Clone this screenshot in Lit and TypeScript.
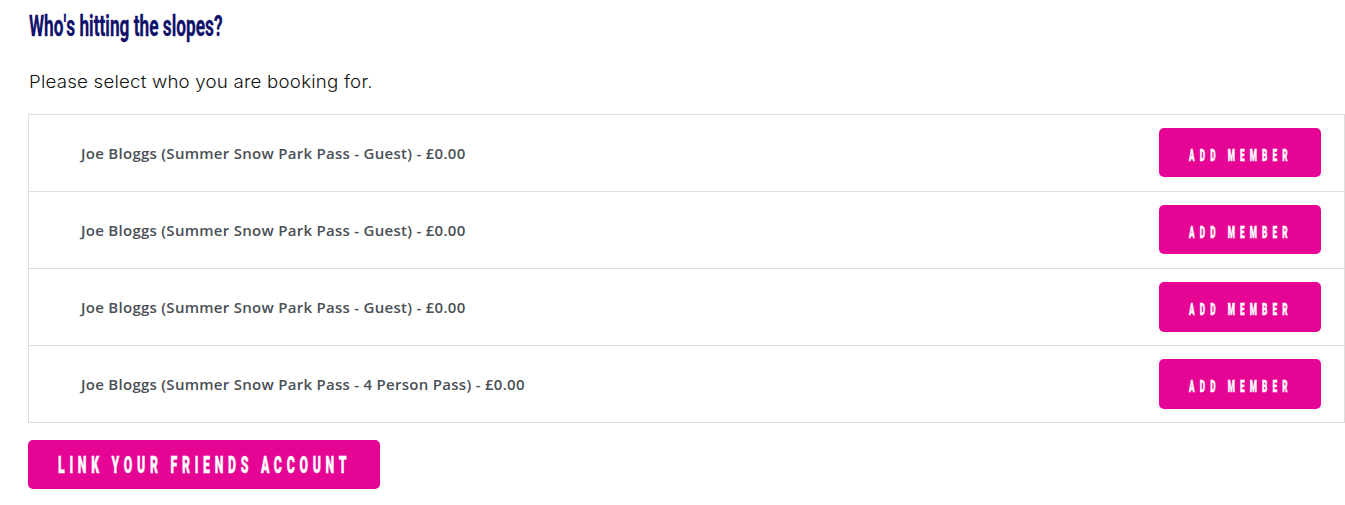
import { LitElement, html, css } from "lit";
import { customElement } from "lit/decorators.js";

const members = [
  "Joe Bloggs (Summer Snow Park Pass - Guest) - £0.00",
  "Joe Bloggs (Summer Snow Park Pass - Guest) - £0.00",
  "Joe Bloggs (Summer Snow Park Pass - Guest) - £0.00",
  "Joe Bloggs (Summer Snow Park Pass - 4 Person Pass) - £0.00",
];

@customElement("app-root")
export class AppRoot extends LitElement {
  static styles = css`
    :host { display: block; box-sizing: border-box; height: 505px; padding: 8px 0 0 28px; background: #fff; overflow: hidden; }
    .title, .intro, .label, .caption { display: inline-block; white-space: nowrap; transform-origin: 0 50%; }
    .head { height: 36px; padding-left: 1px; }
    .title { margin: 0; font: 700 29px/36px Roboto, sans-serif; font-kerning: none; color: #10106b; -webkit-text-stroke: 0.3px #10106b; transform: scaleX(0.595); }
    .lead { height: 70px; padding: 26px 0 0 1px; box-sizing: border-box; }
    .intro { margin: 0; font: 300 17.5px/24px Inter, sans-serif; letter-spacing: 0.2px; color: #111; transform: scaleX(1.067); }
    .list { border: 1px solid #dedede; border-bottom: 0; }
    .row { box-sizing: border-box; height: 77px; border-bottom: 1px solid #dedede; display: flex; align-items: flex-start; justify-content: space-between; padding: 13px 23px 0 52px; }
    .row:nth-child(n + 3) .btn { height: 50px; }
    .label { font: 600 15px/20px "Open Sans", sans-serif; letter-spacing: 0.28px; color: #4a5056; margin-top: 15px; }
    .btn { box-sizing: border-box; border: 0; margin: 0; padding: 7px 0 0 30px; display: flex; align-items: flex-start; border-radius: 5px; background: #e60495; color: #fff; width: 162px; height: 49px; }
    .caption { font: 900 16px/42px Roboto, sans-serif; letter-spacing: 9.9px; -webkit-text-stroke: 0.4px #fff; transform: scaleX(0.515); }
    .link { width: 352px; margin-top: 17px; padding-top: 4px; }
    .link .caption { font-size: 24px; letter-spacing: 9.1px; }
  `;

  render() {
    return html`
      <div class="head"><h2 class="title">Who's hitting the slopes?</h2></div>
      <div class="lead"><p class="intro">Please select who you are booking for.</p></div>
      <div class="list">
        ${members.map((m) => html`<div class="row"><span class="label">${m}</span><button class="btn"><span class="caption">ADD MEMBER</span></button></div>`)}
      </div>
      <button class="btn link"><span class="caption">LINK YOUR FRIENDS ACCOUNT</span></button>
    `;
  }
}
